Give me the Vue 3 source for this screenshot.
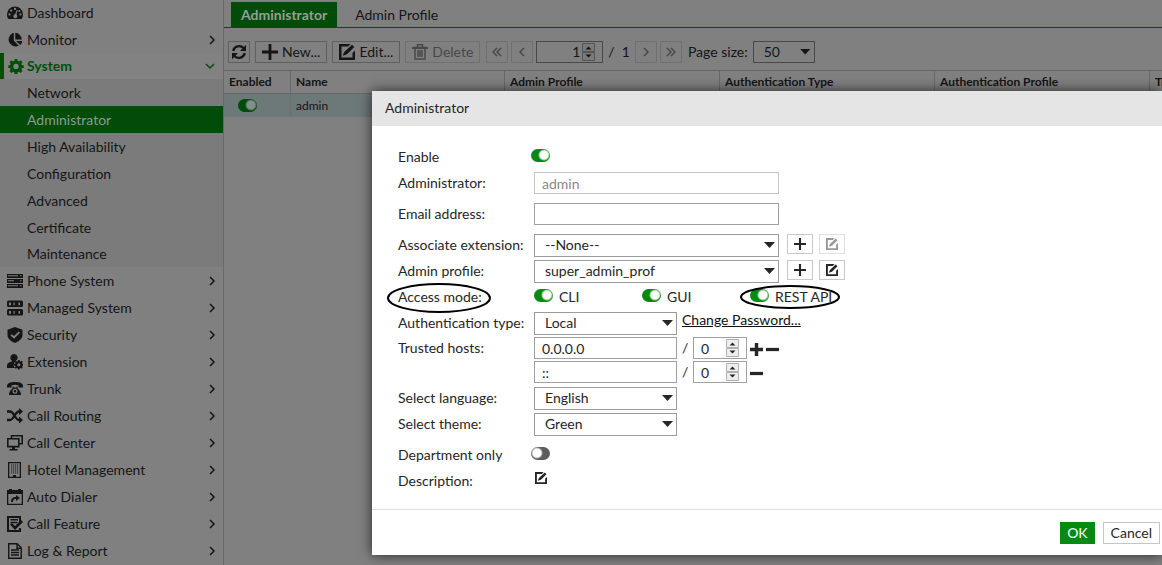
<script setup>
import { ref } from 'vue'

const menu = [
  { label: 'Dashboard', icon: 'dashboard' },
  { label: 'Monitor', icon: 'pie', more: true },
  {
    label: 'System', icon: 'gear', more: true, open: true,
    children: ['Network', 'Administrator', 'High Availability', 'Configuration', 'Advanced', 'Certificate', 'Maintenance'],
  },
  { label: 'Phone System', icon: 'rack', more: true },
  { label: 'Managed System', icon: 'servers', more: true },
  { label: 'Security', icon: 'shield', more: true },
  { label: 'Extension', icon: 'user', more: true },
  { label: 'Trunk', icon: 'phone', more: true },
  { label: 'Call Routing', icon: 'shuffle', more: true },
  { label: 'Call Center', icon: 'screens', more: true },
  { label: 'Hotel Management', icon: 'hotel', more: true },
  { label: 'Auto Dialer', icon: 'calendar', more: true },
  { label: 'Call Feature', icon: 'feature', more: true },
  { label: 'Log & Report', icon: 'log', more: true },
]

const icons = {
  dashboard: '<path fill-rule="evenodd" d="M8 1.5a8 8 0 0 0-8 8c0 1.700.5 3.200 1.300 4.500h13.400A8.500 8.500 0 0 0 16 9.500a8 8 0 0 0-8-8zM8 2.800a1.100 1.100 0 1 1 0 2.200 1.100 1.100 0 0 1 0-2.200zM4.100 4.500a1.100 1.100 0 1 1 0 2.200 1.100 1.100 0 0 1 0-2.200zM12.300 5a1 1 0 1 1 0 2 1 1 0 0 1 0-2zM2.500 8.300a1.100 1.100 0 1 1 0 2.200 1.100 1.100 0 0 1 0-2.200zM13.500 8.300a1.100 1.100 0 1 1 0 2.200 1.100 1.100 0 0 1 0-2.200zM9.800 4.800l.9.300-1.300 4.500a2 2 0 1 1-1.300-.300z"/>',
  pie: '<path d="M6.800.8v7.700l5 5.300A7 7 0 1 1 6.800.8zM8.300.8a7 7 0 0 1 6.500 6.700H8.300zM9 9h6.200c-.1 1.600-.8 3-1.900 4.100z"/>',
  gear: '<path fill-rule="evenodd" d="M6.700 1h2.600l.4 2 1.200.5 1.700-1.200 1.900 1.900-1.200 1.700.5 1.200 2 .4v2.300l-2 .4-.5 1.200 1.200 1.700-1.900 1.900-1.700-1.200-1.200.5-.4 2H6.700l-.4-2-1.200-.5L3.400 15l-1.900-1.900 1.200-1.700-.5-1.200-2-.4V7.500l2-.4.5-1.200-1.200-1.700 1.900-1.900 1.700 1.200L6.300 3zM8 5.700a2.700 2.700 0 1 0 0 5.400 2.700 2.700 0 0 0 0-5.400z"/>',
  rack: '<path fill-rule="evenodd" d="M0 1h16v4H0zM1 2.300v1h10v-1zM0 6h16v4H0zM1 7.300v1h6v-1zM0 11h16v4H0zM1 12.300v1h10v-1zM13 2.300h1.500v1H13zM13 7.300h1.500v1H13zM13 12.300h1.500v1H13z"/>',
  servers: '<path fill-rule="evenodd" d="M1.500.5h13A1.500 1.500 0 0 1 16 2v3.500A1.500 1.500 0 0 1 14.500 7h-13A1.500 1.500 0 0 1 0 5.500V2A1.500 1.500 0 0 1 1.500.5zM2 2.500v2.700h2V2.500zM6.500 2.500v2.700h1.200V2.500zM11.500 2.500v2.700H13V2.500zM1.500 9h13a1.500 1.500 0 0 1 1.500 1.500V14a1.500 1.500 0 0 1-1.500 1.500h-13A1.500 1.500 0 0 1 0 14v-3.500A1.500 1.500 0 0 1 1.500 9zM2 11v2.700h2V11zM6.500 11v2.700h1.200V11zM11.500 11v2.700H13V11z"/>',
  shield: '<path fill-rule="evenodd" d="M8 0l7.500 2.700V8c0 3.500-3 6-7.500 8C3.500 14 .5 11.500.5 8V2.700zM4.800 7.200L3.500 8.500 7 11.700l6-6-1.300-1.200L7 9.100z"/>',
  user: '<path fill-rule="evenodd" d="M7 0a3.600 3.600 0 0 1 2.200 6.500C7.500 8 6.500 10 7 12.500L8 14H0v-2c0-3 2-3.500 4.800-4.500v-1A3.600 3.600 0 0 1 7 0zM11 6h1.600l.3 1.200.8.3 1.100-.7 1 1-.7 1.100.3.800 1 .3v1.500l-1 .3-.3.800.7 1.100-1 1-1.100-.7-.8.300-.3 1.200H11l-.3-1.200-.8-.3-1.100.7-1-1 .7-1.100-.3-.8L7 11.500V10l1.200-.3.3-.8-.7-1.100 1-1 1.100.7.800-.3zM11.800 9.300a1.500 1.500 0 1 0 0 3 1.500 1.500 0 0 0 0-3z"/>',
  phone: '<path fill-rule="evenodd" d="M0 4.500C1 1.500 4 1 8 1s7 .5 8 3.500v2h-4.500V4.300C9 3.500 7 3.500 4.500 4.300v2.200H0zM5.500 5.500h1v1h3v-1h1v2c2.500 2 3.500 4 3.500 6.500H2c0-2.500 1-4.500 3.500-6.500zM8 7.800a2.500 2.500 0 1 0 0 5 2.500 2.500 0 0 0 0-5zM8 9a1.300 1.300 0 1 1 0 2.600A1.300 1.300 0 0 1 8 9z"/>',
  shuffle: '<path d="M0 3.500h3c4 0 5 8.500 9 8.500h1M0 12h3c4 0 5-8.500 9-8.500h1" fill="none" stroke="currentColor" stroke-width="2.300"/><path d="M12 0l4 3.500L12 7zM12 8.500l4 3.500-4 3.500z"/>',
  screens: '<path d="M4.500 3V.8h10.700v8H12.500M.8 3.800h11v7.800H.8z" fill="none" stroke="currentColor" stroke-width="1.600"/><path d="M5 12h3v2h2.500v1.500h-8V14H5z"/>',
  hotel: '<path fill-rule="evenodd" d="M1 0h13v16H1zM2.300 1.300v13.400H6V13h3v1.700h3.700V1.300z"/><path d="M4 3h8M4 5h8M4 7h8M4 9h8M4 11h8" fill="none" stroke="currentColor" stroke-width="1.200" stroke-dasharray="1.200 .8"/>',
  calendar: '<path fill-rule="evenodd" d="M0 1h2V0h3v1h6V0h3v1h2v15H0zM1.300 5v9.700h13.400V5z"/><path d="M9 6l4 3-4 3v-2c-2 0-3 .5-3 3H4c0-3.500 1.500-5 5-5z"/>',
  feature: '<path d="M13 6V1H1v14h12v-3" fill="none" stroke="currentColor" stroke-width="2"/><path d="M3.500 3.800h7.500M3.500 6.500h7" fill="none" stroke="currentColor" stroke-width="1.500"/><path d="M3 8.500l2-1.500 3 3L14 4l2 2-8 8z"/>',
  log: '<path d="M1.700.7h8.500l4 4v10.600H1.700zM10 .7v4.500h4" fill="none" stroke="currentColor" stroke-width="1.400"/><path d="M4 7h8M4 9.500h8M4 12h8" fill="none" stroke="currentColor" stroke-width="1.300"/>',
  refresh: '<path d="M2.200 7a6 6 0 0 1 10.300-3M13.800 9a6 6 0 0 1-10.300 3" fill="none" stroke="currentColor" stroke-width="2.300"/><path d="M15 .8V7H9zM1 15.200V9h6z"/>',
  plus: '<path d="M6.600 0h2.800v6.600H16v2.800H9.400V16H6.600V9.400H0V6.600h6.600z"/>',
  minus: '<path d="M0 6h16v4H0z"/>',
  thickplus: '<path d="M5.900 0h4.200v5.900H16v4.200h-5.900V16H5.900v-5.900H0V5.900h5.900z"/>',
  edit: '<path fill-rule="evenodd" d="M0 0h11.500L9 2.500H2.500v11h11V9L16 6.500V16H0zM13 .8L15.300 3 8 10.300l-4.300 1.500L5.200 8z"/>',
  trash: '<path d="M1 3.500h14M5.500 3V.8h5V3M3 5v10h10V5M6 6v7M8 6v7M10 6v7" fill="none" stroke="currentColor" stroke-width="1.500"/><path d="M0 3h16v2H0z"/>',
}

const columns = ['Enabled', 'Name', 'Admin Profile', 'Authentication Type', 'Authentication Profile', 'Trusted Hosts']
const modes = ref([
  { label: 'CLI', on: true },
  { label: 'GUI', on: true },
  { label: 'REST API', on: true, marked: true },
])
const hosts = ref([
  { address: '0.0.0.0', mask: 0 },
  { address: '::', mask: 0 },
])
const enabled = ref(true)
const department = ref(false)
const page = ref(1)
</script>

<template>
  <div class="app">
    <nav class="sidebar" aria-label="Main menu">
      <ul class="menu">
        <li v-for="item in menu" :key="item.label">
          <a href="#" class="item" :class="{ open: item.open }">
            <svg class="icon" viewBox="0 0 16 16" v-html="icons[item.icon]"></svg>
            <span class="text">{{ item.label }}</span>
            <svg v-if="item.more" class="arrow" viewBox="0 0 10 10">
              <path :d="item.open ? 'M1 3l4 4 4-4' : 'M3 1l4 4-4 4'" />
            </svg>
          </a>
          <ul v-if="item.children" class="submenu">
            <li v-for="child in item.children" :key="child">
              <a href="#" class="child" :class="{ current: child === 'Administrator' }">{{ child }}</a>
            </li>
          </ul>
        </li>
      </ul>
    </nav>

    <main class="content">
      <div class="tabs">
        <button class="tab active">Administrator</button>
        <button class="tab">Admin Profile</button>
      </div>
      <div class="toolbar">
        <button class="tool square" aria-label="Refresh"><svg class="icon" viewBox="0 0 16 16" v-html="icons.refresh"></svg></button>
        <button class="tool"><svg class="icon" viewBox="0 0 16 16" v-html="icons.plus"></svg>New...</button>
        <button class="tool"><svg class="icon" viewBox="0 0 16 16" v-html="icons.edit"></svg>Edit...</button>
        <button class="tool off" disabled><svg class="icon" viewBox="0 0 16 16" v-html="icons.trash"></svg>Delete</button>
        <div class="pager">
          <button class="tool square off" disabled aria-label="First page"><svg class="chev" viewBox="0 0 10 10"><path d="M5 1L1 5l4 4M9 1L5 5l4 4" /></svg></button>
          <button class="tool square off" disabled aria-label="Previous page"><svg class="chev" viewBox="0 0 10 10"><path d="M7 1L3 5l4 4" /></svg></button>
          <span class="number page">
            <input v-model="page" type="number" aria-label="Page">
            <svg class="spin" viewBox="0 0 13 18"><path class="box" d="M.5.500h12v8H.5zM.5 9.500h12v8H.5z" /><path d="M3.500 6.500h6l-3-3zM3.500 11.500h6l-3 3z" /></svg>
          </span>
          <span class="total">/&nbsp; 1</span>
          <button class="tool square off" disabled aria-label="Next page"><svg class="chev" viewBox="0 0 10 10"><path d="M3 1l4 4-4 4" /></svg></button>
          <button class="tool square off" disabled aria-label="Last page"><svg class="chev" viewBox="0 0 10 10"><path d="M1 1l4 4-4 4M5 1l4 4-4 4" /></svg></button>
        </div>
        <label for="size">Page size:</label>
        <span class="select size"><select id="size"><option>50</option></select></span>
      </div>
      <div class="grid">
        <table>
          <colgroup><col class="first"><col class="second"><col v-for="n in 4" :key="n"></colgroup>
          <thead><tr><th v-for="c in columns" :key="c">{{ c }}</th></tr></thead>
          <tbody>
            <tr>
              <td><input type="checkbox" class="toggle dim" checked aria-label="Enabled"></td>
              <td>admin</td><td></td><td></td><td></td><td></td>
            </tr>
          </tbody>
        </table>
      </div>
    </main>

    <section class="dialog" role="dialog" aria-labelledby="title">
      <h2 id="title">Administrator</h2>
      <form class="form" @submit.prevent>
        <div class="row">
          <label class="name" for="enable">Enable</label>
          <input id="enable" v-model="enabled" class="toggle outdent" type="checkbox">
        </div>
        <div class="row">
          <label class="name" for="admin">Administrator:</label>
          <input id="admin" class="field wide" value="admin" disabled>
        </div>
        <div class="row spaced">
          <label class="name" for="email">Email address:</label>
          <input id="email" class="field wide" type="email">
        </div>
        <div class="row spaced">
          <label class="name" for="ext">Associate extension:</label>
          <span class="select wide"><select id="ext"><option>--None--</option></select></span>
          <button class="mini" aria-label="Add extension"><svg viewBox="0 0 16 16" v-html="icons.plus"></svg></button>
          <button class="mini" disabled aria-label="Edit extension"><svg viewBox="0 0 16 16" v-html="icons.edit"></svg></button>
        </div>
        <div class="row">
          <label class="name" for="profile">Admin profile:</label>
          <span class="select wide"><select id="profile"><option>super_admin_prof</option></select></span>
          <button class="mini" aria-label="Add profile"><svg viewBox="0 0 16 16" v-html="icons.plus"></svg></button>
          <button class="mini" aria-label="Edit profile"><svg viewBox="0 0 16 16" v-html="icons.edit"></svg></button>
        </div>
        <div class="row">
          <span class="name">
            <span class="marked">Access mode:<svg class="ring" viewBox="0 0 104 30" preserveAspectRatio="none"><ellipse cx="52" cy="15" rx="51" ry="14" /></svg></span>
          </span>
          <label v-for="m in modes" :key="m.label" class="mode" :class="{ marked: m.marked }">
            <input v-model="m.on" class="toggle" type="checkbox">{{ m.label }}
            <svg v-if="m.marked" class="ring tight" viewBox="0 0 100 24" preserveAspectRatio="none"><ellipse cx="50" cy="12" rx="49" ry="11" /></svg>
          </label>
        </div>
        <div class="row">
          <label class="name" for="auth">Authentication type:</label>
          <span class="select short"><select id="auth"><option>Local</option></select></span>
          <a href="#" class="link">Change Password...</a>
        </div>
        <div class="hosts">
          <div v-for="(h, i) in hosts" :key="i" class="row host">
            <label class="name" :for="'host' + i">{{ i === 0 ? 'Trusted hosts:' : '' }}</label>
            <input :id="'host' + i" v-model="h.address" class="field short">
            <span class="slash">/</span>
            <span class="number">
              <input v-model="h.mask" type="number" aria-label="Prefix length">
              <svg class="spin" viewBox="0 0 13 18"><path class="box" d="M.5.500h12v8H.5zM.5 9.500h12v8H.5z" /><path d="M3.500 6.500h6l-3-3zM3.500 11.500h6l-3 3z" /></svg>
            </span>
            <button v-if="i === 0" class="bare" aria-label="Add host"><svg viewBox="0 0 16 16" v-html="icons.thickplus"></svg></button>
            <button class="bare" aria-label="Remove host"><svg viewBox="0 0 16 16" v-html="icons.minus"></svg></button>
          </div>
        </div>
        <div class="row">
          <label class="name" for="lang">Select language:</label>
          <span class="select short"><select id="lang"><option>English</option></select></span>
        </div>
        <div class="row">
          <label class="name" for="theme">Select theme:</label>
          <span class="select short"><select id="theme"><option>Green</option></select></span>
        </div>
        <div class="row spaced">
          <label class="name" for="dept">Department only</label>
          <input id="dept" v-model="department" class="toggle outdent" type="checkbox">
        </div>
        <div class="row">
          <span class="name">Description:</span>
          <button class="note" aria-label="Edit description"><svg viewBox="0 0 16 16" v-html="icons.edit"></svg></button>
        </div>
      </form>
      <footer class="actions">
        <button class="ok">OK</button>
        <button class="cancel">Cancel</button>
      </footer>
    </section>
  </div>
</template>

<style>
body {
  margin: 0;
  overflow: hidden;
}
</style>

<style scoped>
.app {
  position: relative;
  display: flex;
  min-height: 100vh;
  background: #808080;
  color: #151515;
  font: 14px/20px Lato, "Open Sans", sans-serif;
}
.app * {
  box-sizing: border-box;
}
button, input, select {
  margin: 0;
  color: inherit;
  font: inherit;
}
button {
  cursor: pointer;
}
svg {
  display: block;
  flex: none;
  fill: currentColor;
}
a {
  color: inherit;
  text-decoration: none;
}

.sidebar {
  flex: none;
  width: 224px;
  height: 100vh;
  overflow: hidden;
  border-right: 1px solid #686868;
}
.menu, .submenu {
  margin: 0;
  padding: 0;
  list-style: none;
}
.item {
  display: flex;
  align-items: center;
  height: 27px;
  padding: 0 6px 0 7px;
}
.menu > li:first-child .item {
  height: 26px;
}
.icon {
  width: 16px;
  height: 16px;
}
.item .text {
  flex: 1;
  padding-left: 4px;
}
.arrow, .chev {
  width: 10px;
  height: 10px;
  fill: none;
  stroke: currentColor;
  stroke-width: 1.500;
}
.item.open {
  height: 26px;
  padding-left: 4px;
  padding-right: 8px;
  border-left: 4px solid #004f08;
  background: #828282;
  color: #004f08;
  font-weight: bold;
}
.item.open .text {
  padding-left: 3px;
}
.submenu {
  background: #7b7b7b;
}
.child {
  display: flex;
  align-items: center;
  height: 27px;
  padding-left: 27px;
}
.child.current {
  background: #004c08;
  color: #8f9a90;
}
.submenu li:last-child .child {
  height: 26px;
}

.content {
  flex: 1;
  min-width: 0;
  height: 100vh;
  overflow: hidden;
}
.tabs {
  display: flex;
  padding: 2px 7px 0;
  border-bottom: 1px solid #004c08;
}
.tab {
  height: 25px;
  padding: 0 18px;
  border: 0;
  background: none;
}
.tab.active {
  padding: 0 10px;
  background: #004c08;
  color: #93a094;
  font-weight: bold;
}
.toolbar {
  display: flex;
  align-items: center;
  gap: 5px;
  height: 42px;
  padding: 5px 4px 0;
  white-space: nowrap;
}
.tool {
  display: flex;
  align-items: center;
  justify-content: center;
  gap: 4px;
  height: 22px;
  padding: 0 6px;
  border: 1px solid #5f5f5f;
  background: none;
}
.tool.square {
  width: 22px;
  padding: 0;
}
.tool.off {
  border-color: #707070;
  color: #484848;
}
.pager {
  display: flex;
  align-items: center;
  gap: 3px;
  padding: 0 1px;
}
.total {
  padding: 0 2px;
}
.grid {
  overflow: hidden;
  border-top: 1px solid #666;
}
table {
  width: 1200px;
  border-collapse: separate;
  border-spacing: 0;
  table-layout: fixed;
  font-size: 12px;
}
.first {
  width: 67px;
}
.second {
  width: 214px;
}
col {
  width: 215px;
}
col:last-child {
  width: 274px;
}
th {
  height: 23px;
  padding: 0 5px;
  border-right: 1px solid #686868;
  border-bottom: 1px solid #686868;
  text-align: left;
  line-height: 16px;
  white-space: nowrap;
}
td {
  height: 23px;
  padding: 0 5px;
  border-right: 1px solid #687273;
  background: #6d7879;
}
td:first-child {
  padding-left: 14px;
}

.toggle {
  appearance: none;
  flex: none;
  display: block;
  width: 19px;
  height: 13px;
  border-radius: 7px;
  background: radial-gradient(circle at 13px 6px, #fff 4px, transparent 6px) #078a14;
}
.toggle:not(:checked) {
  background: radial-gradient(circle at 6px 6px, #fff 4px, transparent 6px) #5c5c5c;
}
.toggle.dim {
  background: radial-gradient(circle at 13px 6px, #848c8d 4px, transparent 6px) #004c08;
}
.toggle.outdent {
  margin: 0 0 3px -3px;
}

.select {
  display: grid;
  align-items: center;
  height: 23px;
}
.select select {
  grid-area: 1 / 1;
  appearance: none;
  width: 100%;
  height: 100%;
  padding: 0 24px 0 10px;
  border: 1px solid #9b9b9b;
  border-radius: 0;
  background: none;
}
.select::after {
  content: "";
  grid-area: 1 / 1;
  justify-self: end;
  width: 11px;
  height: 6px;
  margin-right: 4px;
  background: currentColor;
  clip-path: polygon(0 0, 100% 0, 50% 100%);
  pointer-events: none;
}
.select.size {
  width: 62px;
  height: 22px;
}
.size select, .number.page input {
  border-color: #484848;
}
.number {
  display: grid;
  align-items: center;
  width: 54px;
}
.number input {
  grid-area: 1 / 1;
  appearance: textfield;
  width: 100%;
  height: 22px;
  padding: 0 22px 0 7px;
  border: 1px solid #a0a0a0;
  background: none;
}
.number input::-webkit-inner-spin-button {
  appearance: none;
}
.spin {
  grid-area: 1 / 1;
  justify-self: end;
  width: 13px;
  height: 18px;
  margin-right: 8px;
  pointer-events: none;
}
.spin .box {
  fill: #eee;
  stroke: #b0b0b0;
}
.number.page {
  width: 67px;
}
.number.page input {
  text-align: right;
}
.page .spin .box {
  fill: #7a7a7a;
  stroke: #555;
}

.dialog {
  position: absolute;
  top: 91px;
  right: 0;
  left: 372px;
  background: #fff;
  box-shadow: 0 0 12px rgba(0, 0, 0, 0.7);
  color: #262626;
}
h2 {
  margin: 0;
  padding: 7px 13px 8px;
  background: #e5e5e5;
  font-size: 14px;
  font-weight: normal;
  line-height: 20px;
}
.form {
  padding: 18px 0 15px 26px;
}
.row {
  display: flex;
  align-items: center;
  height: 26px;
}
.row.spaced {
  margin-top: 5px;
}
.name {
  flex: none;
  width: 136px;
  white-space: nowrap;
}
.field {
  height: 22px;
  padding: 0 7px;
  border: 1px solid #a0a0a0;
  background: none;
}
.field:disabled {
  border-color: #c5c5c5;
  color: #888;
}
.wide {
  width: 245px;
}
.short {
  width: 143px;
}
.mini {
  display: grid;
  place-items: center;
  width: 26px;
  height: 20px;
  margin: 0 -2px 2px 8px;
  padding: 0;
  border: 1px solid #c8c8c8;
  background: none;
}
.mini:disabled {
  border-color: #e0e0e0;
  color: #999;
}
.mini svg, .note svg {
  width: 12px;
  height: 12px;
}
.mode {
  display: flex;
  align-items: center;
  gap: 6px;
  width: 108px;
  margin-top: -1px;
}
.mode .toggle {
  margin-bottom: 3px;
}
.marked {
  position: relative;
}
.ring {
  position: absolute;
  top: -5px;
  left: -11px;
  width: 104px;
  height: 30px;
  fill: none;
  stroke: #000;
  stroke-width: 2;
  pointer-events: none;
}
.ring.tight {
  top: -2px;
  left: -10px;
  width: 100px;
  height: 24px;
}
.link {
  margin: 0 0 6px 5px;
  color: #111;
  text-decoration: underline;
}
.hosts {
  padding-bottom: 1px;
}
.host {
  height: 24px;
}
.slash {
  width: 16px;
  padding-left: 5px;
}
.bare, .note {
  display: block;
  padding: 0;
  border: 0;
  background: none;
}
.bare {
  margin: 2px 0 0 3px;
}
.bare svg {
  width: 13px;
  height: 13px;
}
.note {
  margin: 0 0 6px 1px;
}
.actions {
  display: flex;
  justify-content: flex-end;
  gap: 8px;
  padding: 12px 2px 11px;
  border-top: 1px solid #e0e0e0;
}
.actions button {
  height: 22px;
  padding: 0 7px;
  border: 1px solid #c5c5c5;
  background: #fff;
}
.actions .ok {
  padding: 0 6px;
  border-color: #078a14;
  background: #078a14;
  color: #fff;
}
</style>
